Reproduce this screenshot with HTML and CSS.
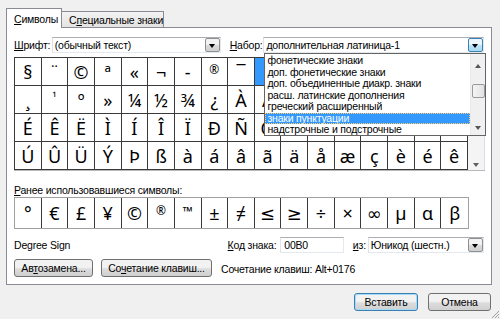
FILE: index.html
```html
<!DOCTYPE html>
<html lang="ru">
<head>
    <meta charset="UTF-8">
    <title>Символ</title>
    <link rel="stylesheet" href="styles.css">
</head>
<body>
    <div class="dialog">
        <div class="tabs">
            <div class="tab active"><u>С</u>имволы</div>
            <div class="tab">С<u>п</u>ециальные знаки</div>
        </div>

        <div class="panel">
            <div class="font-row">
                <span class="lbl lbl-font"><u>Ш</u>рифт:</span>
                <div class="combo combo-font">
                    <span class="combo-text">(обычный текст)</span>
                    <span class="drop"></span>
                </div>
                <span class="lbl lbl-set"><u>Н</u>абор:</span>
                <div class="combo combo-set">
                    <span class="combo-text">дополнительная латиница-1</span>
                    <span class="drop hot"></span>

                    <div class="list">
                        <ul>
                            <li>фонетические знаки</li>
                            <li>доп. фонетические знаки</li>
                            <li>доп. объединенные диакр. знаки</li>
                            <li>расш. латинские дополнения</li>
                            <li>греческий расширенный</li>
                            <li class="sel">знаки пунктуации</li>
                            <li>надстрочные и подстрочные</li>
                        </ul>
                        <div class="list-scroll">
                            <span class="arr up"></span>
                            <span class="thumb"></span>
                            <span class="arr down"></span>
                        </div>
                    </div>
                </div>
            </div>

            <div class="chars">
                <div class="grid">
                    <span>§</span><span>¨</span><span>©</span><span>ª</span><span>«</span><span>¬</span><span>-</span><span class="small">®</span><span>¯</span><span class="picked">°</span><span>±</span><span>²</span><span>³</span><span>´</span><span>µ</span><span>¶</span><span>·</span>
                    <span>¸</span><span class="small">¹</span><span>º</span><span>»</span><span>¼</span><span>½</span><span>¾</span><span>¿</span><span>À</span><span>Á</span><span>Â</span><span>Ã</span><span>Ä</span><span>Å</span><span>Æ</span><span>Ç</span><span>È</span>
                    <span>É</span><span>Ê</span><span>Ë</span><span>Ì</span><span>Í</span><span>Î</span><span>Ï</span><span>Ð</span><span>Ñ</span><span>Ò</span><span>Ó</span><span>Ô</span><span>Õ</span><span>Ö</span><span>×</span><span>Ø</span><span>Ù</span>
                    <span>Ú</span><span>Û</span><span>Ü</span><span>Ý</span><span>Þ</span><span>ß</span><span>à</span><span>á</span><span>â</span><span>ã</span><span>ä</span><span>å</span><span>æ</span><span>ç</span><span>è</span><span>é</span><span>ê</span>
                </div>
                <div class="vscroll">
                    <span class="arr down"></span>
                </div>
            </div>

            <div class="recent-label"><u>Р</u>анее использовавшиеся символы:</div>
            <div class="recent">
                <span>°</span><span>€</span><span>£</span><span>¥</span><span>©</span><span class="small">®</span><span class="tm">™</span><span>±</span><span>≠</span><span>≤</span><span>≥</span><span>÷</span><span>×</span><span>∞</span><span>µ</span><span>α</span><span>β</span>
            </div>

            <div class="info-row">
                <span class="char-name">Degree Sign</span>
                <span class="lbl lbl-code"><u>К</u>од знака:</span>
                <div class="field">00B0</div>
                <span class="lbl lbl-from"><u>и</u>з:</span>
                <div class="combo combo-from">
                    <span class="combo-text">Юникод (шестн.)</span>
                    <span class="drop"></span>
                </div>
            </div>

            <div class="btn-row">
                <button class="btn btn-auto">Ав<u>т</u>озамена...</button>
                <button class="btn btn-keys">Со<u>ч</u>етание клавиш...</button>
                <span class="shortcut">Сочетание клавиш: Alt+0176</span>
            </div>
        </div>

        <div class="footer">
            <button class="btn btn-insert">Вставить</button>
            <button class="btn btn-cancel">Отмена</button>
            <svg class="grip" width="10" height="10" viewBox="0 0 10 10">
                <path d="M9 2 L2 9 M9 5 L5 9 M9 8 L8 9" stroke="#a0a0a0" stroke-width="1"/>
            </svg>
        </div>
    </div>
</body>
</html>
```

FILE: styles.css
```css
* {
    box-sizing: border-box;
    margin: 0;
    padding: 0;
}

body {
    width: 500px;
    height: 319px;
    background-color: #f0f0f0;
    font-family: "Liberation Sans", Arial, sans-serif;
    font-size: 10.5px;
    letter-spacing: -0.2px;
    color: #000;
    overflow: hidden;
    white-space: nowrap;
}

u {
    text-decoration: underline;
}

.dialog {
    padding: 8px 8px 0 6px;
    position: relative;
    height: 319px;
}

/* tabs */

.tabs {
    display: flex;
    align-items: flex-end;
    height: 19px;
}

.tab {
    height: 16px;
    padding: 2px 0 0 7px;
    border: 1px solid #898c95;
    border-bottom: none;
    background: linear-gradient(#f3f3f3, #e3e3e3);
    width: 103px;
    margin-left: -1px;
}

.tab.active {
    height: 20px;
    width: 56px;
    margin-left: 0;
    margin-bottom: -1px;
    padding-top: 4px;
    background-color: #fff;
    background-image: none;
    position: relative;
    z-index: 1;
}

.panel {
    background-color: #fff;
    border: 1px solid #898c95;
    height: 258px;
    padding: 9px 7px 0 7px;
}

/* combos */

.font-row {
    display: flex;
    align-items: center;
    height: 16px;
}

.lbl-font {
    width: 38px;
}

.lbl-set {
    width: 34px;
    margin-left: 9px;
}

.combo {
    position: relative;
    height: 16px;
    border: 1px solid #abadb3;
    border-color: #abadb3 #e3e9ef #e3e9ef #e2e3ea;
    background-color: #fff;
    display: flex;
    align-items: center;
}

.combo-text {
    flex: 1;
    padding-left: 2px;
}

.combo-font {
    width: 170px;
}

.combo-set {
    width: 222px;
    z-index: 5;
}

.drop {
    width: 15px;
    height: 14px;
    border: 1px solid #8e8f8f;
    border-radius: 2px;
    background: linear-gradient(#f2f2f2 45%, #dcdcdc 50%, #cfcfcf);
    position: relative;
}

.drop::after {
    content: "";
    position: absolute;
    left: 3px;
    top: 5px;
    border-left: 3.5px solid transparent;
    border-right: 3.5px solid transparent;
    border-top: 4px solid #000;
}

.drop.hot {
    border-color: #3c7fb1;
    background: linear-gradient(#eaf6fd 45%, #bee6fd 50%, #a7d9f5);
}

/* dropdown list */

.list {
    position: absolute;
    top: 15px;
    left: 0;
    width: 222px;
    height: 83px;
    background-color: #fff;
    border: 1px solid #646464;
    display: flex;
}

.list ul {
    list-style: none;
    flex: 1;
    padding-top: 1px;
}

.list li {
    height: 11.5px;
    line-height: 11px;
    padding-left: 2px;
    color: #000;
}

.list li.sel {
    background-color: #3399ff;
    color: #fff;
    outline: 1px dotted #ffcc66;
    outline-offset: -1px;
}

.list-scroll {
    width: 15px;
    background-color: #f0f0f0;
    position: relative;
    border-left: 1px solid #e8e8e8;
}

.list-scroll .thumb {
    position: absolute;
    left: 1px;
    top: 30px;
    width: 13px;
    height: 14px;
    border: 1px solid #9a9a9a;
    border-radius: 2px;
    background: linear-gradient(90deg, #f4f4f4, #e2e2e2);
}

.arr {
    position: absolute;
    left: 4px;
    border-left: 3.5px solid transparent;
    border-right: 3.5px solid transparent;
}

.arr.up {
    top: 10px;
    border-bottom: 4px solid #555;
}

.arr.down {
    bottom: 5px;
    border-top: 4px solid #555;
}

/* character grid */

.chars {
    margin-top: 4px;
    display: flex;
    width: 471px;
    border-bottom: 1px solid #b8b8b8;
}

.grid {
    width: 454px;
    display: grid;
    grid-template-columns: repeat(17, 1fr);
    border-left: 1px solid #3a3a3a;
    border-top: 1px solid #3a3a3a;
}

.grid span, .recent span {
    height: 28px;
    border-right: 1px solid #3a3a3a;
    border-bottom: 1px solid #3a3a3a;
    display: flex;
    align-items: center;
    justify-content: center;
    font-family: "Noto Sans", "DejaVu Sans", sans-serif;
    font-size: 18px;
    letter-spacing: 0;
}

.grid span.small, .recent span.small {
    font-size: 12px;
    padding-bottom: 5px;
}

.grid span.picked {
    background-color: #3399ff;
    color: #fff;
}

.vscroll {
    width: 17px;
    position: relative;
    background-color: #f4f4f4;
    border-top: 1px solid #dcdcdc;
    border-right: 1px solid #dcdcdc;
}

.vscroll .arr {
    left: 5px;
    bottom: 3px;
    border-top-color: #606060;
}

/* recently used */

.recent-label {
    margin-top: 13px;
    height: 13px;
    line-height: 13px;
}

.recent {
    width: 455px;
    display: grid;
    grid-template-columns: repeat(17, 1fr);
    border: 1px solid #a0a0a0;
}

.recent span {
    height: 30px;
    border-bottom: none;
}

.recent span:last-child {
    border-right: none;
}

.recent span.tm {
    font-size: 13px;
    padding-bottom: 4px;
}

/* info row */

.info-row {
    margin-top: 8px;
    display: flex;
    align-items: center;
    height: 16px;
}

.char-name {
    width: 215px;
}

.lbl-code {
    width: 53px;
}

.field {
    width: 64px;
    height: 16px;
    border: 1px solid #abadb3;
    border-color: #abadb3 #e3e9ef #e3e9ef #e2e3ea;
    padding-left: 3px;
    line-height: 14px;
}

.lbl-from {
    width: 15px;
    margin-left: 9px;
}

.combo-from {
    width: 117px;
}

/* buttons */

.btn-row {
    margin-top: 6px;
    display: flex;
    align-items: center;
    height: 18px;
}

.btn {
    font-family: "Liberation Sans", Arial, sans-serif;
    font-size: 10.5px;
    letter-spacing: -0.2px;
    height: 18px;
    border: 1px solid #707070;
    border-radius: 3px;
    background: linear-gradient(#f2f2f2 45%, #ebebeb 50%, #dddddd 55%, #cfcfcf);
    color: #000;
}

.btn-auto {
    width: 79px;
}

.btn-keys {
    width: 111px;
    margin-left: 8px;
}

.shortcut {
    margin-left: 9px;
    padding-top: 2px;
}

.footer {
    display: flex;
    justify-content: flex-end;
    margin-top: 8px;
    padding-right: 1px;
}

.btn-insert {
    width: 64px;
    border-color: #3c7fb1;
    box-shadow: inset 0 0 0 1px #a6dbf7;
}

.btn-cancel {
    width: 63px;
    margin-left: 10px;
}

.grip {
    position: absolute;
    right: 0;
    bottom: 0;
}
```
